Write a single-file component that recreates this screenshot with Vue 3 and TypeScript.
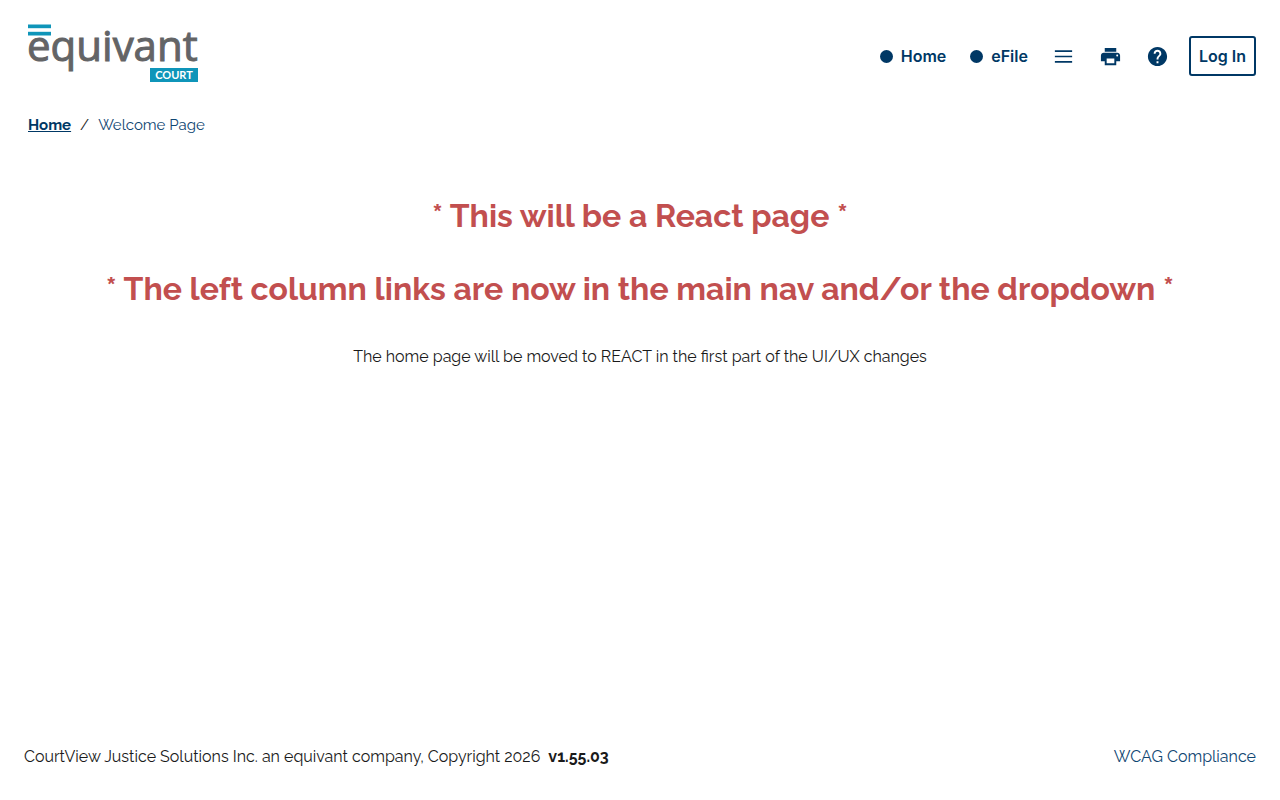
<script setup lang="ts">
interface NavLink {
  label: string
  href: string
}

const navLinks: NavLink[] = [
  { label: 'Home', href: '#home' },
  { label: 'eFile', href: '#efile' },
]

const notices: string[] = [
  '* This will be a React page *',
  '* The left column links are now in the main nav and/or the dropdown *',
]
</script>

<template>
  <div class="page">
    <header class="header">
      <a class="logo" href="#home" aria-label="equivant court">
        <svg width="172" height="64" viewBox="0 0 172 64">
          <rect x="0" y="0.500" width="23" height="3.700" fill="#0f95b9" />
          <rect x="0" y="7.800" width="23" height="3.700" fill="#0f95b9" />
          <text class="logo-name" x="-1" y="37">equivant</text>
          <rect x="122" y="44" width="48" height="14" fill="#0f95b9" />
          <text class="logo-tag" x="146" y="55" text-anchor="middle">COURT</text>
        </svg>
      </a>

      <nav class="nav" aria-label="Main">
        <a v-for="link in navLinks" :key="link.label" class="nav-link" :href="link.href">
          <span class="dot"></span>
          <span>{{ link.label }}</span>
        </a>
        <button class="icon-button" type="button" aria-label="Menu">
          <svg width="23" height="23" viewBox="0 0 24 24" fill="currentColor">
            <path d="M3 5.500h18v1.700H3zM3 11.200h18v1.700H3zM3 16.800h18v1.700H3z" />
          </svg>
        </button>
        <button class="icon-button" type="button" aria-label="Print">
          <svg width="23" height="23" viewBox="0 0 24 24" fill="currentColor">
            <path
              d="M19 8H5c-1.660 0-3 1.340-3 3v6h4v4h12v-4h4v-6c0-1.660-1.340-3-3-3zm-3 11H8v-5h8v5zm3-7c-.55 0-1-.45-1-1s.45-1 1-1 1 .45 1 1-.45 1-1 1zm-1-9H6v4h12V3z"
            />
          </svg>
        </button>
        <button class="icon-button" type="button" aria-label="Help">
          <svg width="23" height="23" viewBox="0 0 24 24" fill="currentColor">
            <path
              d="M12 2C6.480 2 2 6.480 2 12s4.480 10 10 10 10-4.480 10-10S17.520 2 12 2zm1 17h-2v-2h2v2zm2.070-7.750l-.9.920C13.450 12.900 13 13.500 13 15h-2v-.5c0-1.100.45-2.100 1.170-2.830l1.240-1.260c.37-.36.59-.86.59-1.410 0-1.100-.9-2-2-2s-2 .9-2 2H8c0-2.210 1.790-4 4-4s4 1.790 4 4c0 .88-.36 1.680-.93 2.250z"
            />
          </svg>
        </button>
        <button class="login" type="button">Log In</button>
      </nav>
    </header>

    <nav class="breadcrumb" aria-label="Breadcrumb">
      <a class="crumb-home" href="#home">Home</a>
      <span class="slash">/</span>
      <span class="crumb-current">Welcome Page</span>
    </nav>

    <main class="main">
      <h1 v-for="notice in notices" :key="notice" class="notice">{{ notice }}</h1>
      <p class="note">The home page will be moved to REACT in the first part of the UI/UX changes</p>
    </main>

    <footer class="footer">
      <div class="copyright">
        <span>CourtView Justice Solutions Inc. an equivant company, Copyright 2026</span>
        <strong>v1.55.03</strong>
      </div>
      <a class="footer-link" href="#wcag">WCAG Compliance</a>
    </footer>
  </div>
</template>

<style>
body {
  margin: 0;
  background: #fff;
}
</style>

<style scoped>
.page {
  display: flex;
  flex-direction: column;
  box-sizing: border-box;
  min-height: 100vh;
  font-family: Raleway, Lato, sans-serif;
  font-size: 16px;
  line-height: 24px;
  color: #1a1a1a;
}

.header {
  display: flex;
  align-items: center;
  justify-content: space-between;
  padding: 24px 24px 17px 28px;
}

.logo,
.logo svg {
  display: block;
}

.logo svg {
  overflow: visible;
}

.logo-name {
  font-family: "Open Sans", sans-serif;
  font-size: 42px;
  fill: #636466;
  stroke: #636466;
  stroke-width: 1px;
}

.logo-tag {
  font-family: Lato, sans-serif;
  font-size: 11px;
  font-weight: 700;
  fill: #fff;
}

.nav {
  display: flex;
  align-items: center;
  gap: 24px;
  font-family: Inter, sans-serif;
  color: #003865;
}

.nav-link {
  display: flex;
  align-items: center;
  gap: 8px;
  font-size: 16px;
  font-weight: 600;
  color: inherit;
  text-decoration: none;
}

.dot {
  width: 13px;
  height: 13px;
  border-radius: 50%;
  background: #003865;
}

.icon-button {
  display: flex;
  padding: 0;
  border: 0;
  background: none;
  color: inherit;
}

.login {
  height: 40px;
  margin-left: -4px;
  padding: 0 8px;
  border: 2px solid #003865;
  border-radius: 3px;
  background: #fff;
  font: 600 16px/24px Inter, sans-serif;
  color: inherit;
}

.breadcrumb {
  display: flex;
  gap: 9px;
  padding: 8px 28px;
  font-size: 15px;
  color: #1a1a1a;
}

.crumb-home {
  font-weight: 700;
  color: #003865;
}

.crumb-current {
  color: #0f4672;
}

.main {
  flex: 1;
  padding: 51px 24px;
  text-align: center;
}

.notice {
  margin: 0 0 33px;
  font-size: 32px;
  font-weight: 700;
  line-height: 40px;
  color: #c24f4f;
}

.note {
  margin: 36px 0 0;
}

.footer {
  display: flex;
  align-items: center;
  justify-content: space-between;
  padding: 32px 24px 31px;
}

.copyright {
  display: flex;
  gap: 8px;
}

.footer-link {
  color: #0f4672;
  text-decoration: none;
}
</style>
